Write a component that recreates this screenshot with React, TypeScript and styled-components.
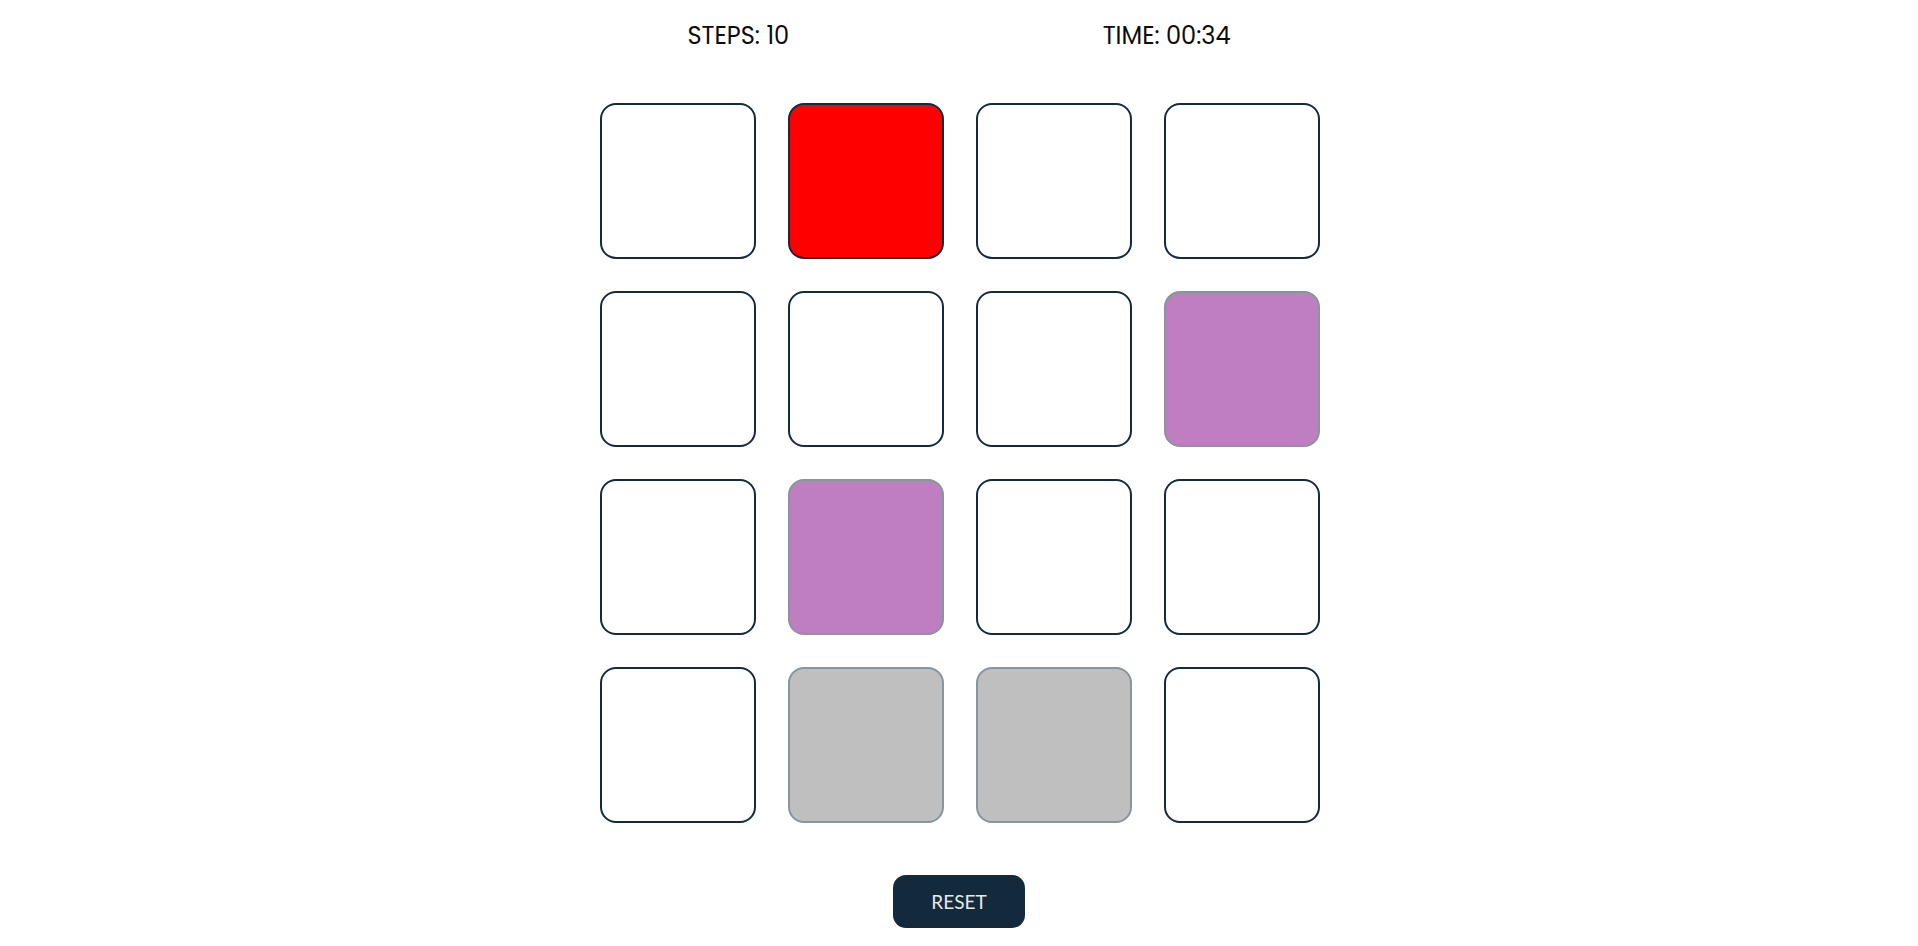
import React, { useState } from 'react';
import styled, { createGlobalStyle } from 'styled-components';

const GlobalStyle = createGlobalStyle`
  html, body {
    margin: 0;
    padding: 0;
    background: #ffffff;
  }
  * {
    box-sizing: border-box;
  }
`;

const Page = styled.div`
  display: flex;
  flex-direction: column;
  align-items: center;
  width: 100%;
  min-height: 946px;
`;

const Header = styled.div`
  width: 1170px;
  height: 70px;
  display: flex;
  justify-content: space-evenly;
  align-items: center;
  font-family: 'Poppins', 'Inter', sans-serif;
  font-size: 24px;
  color: #0b0b0b;
`;

const Stat = styled.div`
  white-space: nowrap;
`;

const Board = styled.div`
  margin-top: 33px;
  margin-left: 2px;
  display: grid;
  grid-template-columns: repeat(4, 156px);
  grid-auto-rows: 156px;
  gap: 32px;
`;

type CardState = 'hidden' | 'open' | 'matched';

const Card = styled.div<{ $state: CardState; $color: string }>`
  border: 2px solid #142b3f;
  border-radius: 16px;
  background: ${p => (p.$state === 'hidden' ? '#ffffff' : p.$color)};
  opacity: ${p => (p.$state === 'matched' ? 0.5 : 1)};
  cursor: pointer;
`;

const ResetButton = styled.button`
  margin-top: 52px;
  width: 132px;
  height: 53px;
  border: none;
  border-radius: 13px;
  background: #132a3d;
  color: #e8e8e8;
  font-family: 'Lato', 'Open Sans', sans-serif;
  font-size: 19px;
  cursor: pointer;
`;

const cards: { color: string; state: CardState }[] = [
  { color: 'white', state: 'hidden' },
  { color: '#ff0000', state: 'open' },
  { color: 'white', state: 'hidden' },
  { color: 'white', state: 'hidden' },
  { color: 'white', state: 'hidden' },
  { color: 'white', state: 'hidden' },
  { color: 'white', state: 'hidden' },
  { color: '#800080', state: 'matched' },
  { color: 'white', state: 'hidden' },
  { color: '#800080', state: 'matched' },
  { color: 'white', state: 'hidden' },
  { color: 'white', state: 'hidden' },
  { color: 'white', state: 'hidden' },
  { color: '#808080', state: 'matched' },
  { color: '#808080', state: 'matched' },
  { color: 'white', state: 'hidden' },
];

const App: React.FC = () => {
  const [steps] = useState(10);
  const [time] = useState('00:34');

  return (
    <>
      <GlobalStyle />
      <Page>
        <Header>
          <Stat>STEPS: {steps}</Stat>
          <Stat>TIME: {time}</Stat>
        </Header>
        <Board>
          {cards.map((c, i) => (
            <Card key={i} $state={c.state} $color={c.color} />
          ))}
        </Board>
        <ResetButton>RESET</ResetButton>
      </Page>
    </>
  );
};

export default App;
